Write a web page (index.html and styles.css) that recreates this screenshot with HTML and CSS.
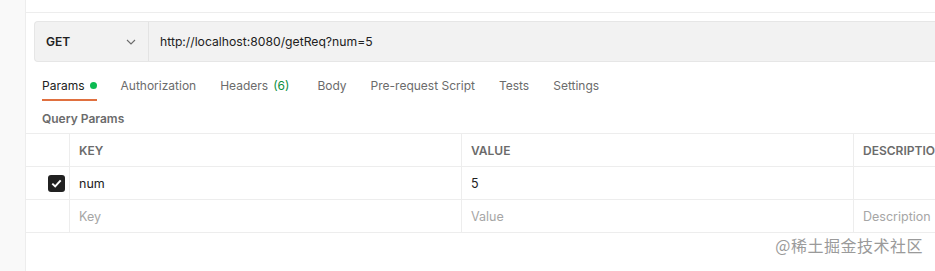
FILE: index.html
```html
<!DOCTYPE html>
<html>
<head>
<meta charset="utf-8">
<title>GET getReq</title>
<link rel="stylesheet" href="styles.css">
</head>
<body>
<div class="sidebar"></div>
<div class="main">
    <div class="topbar"></div>

    <div class="urlbar">
        <div class="method">
            <span>GET</span>
            <svg class="chevron" width="10" height="6" viewBox="0 0 10 6"><path d="M1 1l4 4 4-4" fill="none" stroke="#6b6b6b" stroke-width="1.1"/></svg>
        </div>
        <div class="url">http://localhost:8080/getReq?num=5</div>
    </div>

    <div class="tabs">
        <div class="tab active">Params <span class="dot"></span></div>
        <div class="tab">Authorization</div>
        <div class="tab headers">Headers <span class="count">(6)</span></div>
        <div class="tab">Body</div>
        <div class="tab">Pre-request Script</div>
        <div class="tab">Tests</div>
        <div class="tab">Settings</div>
    </div>

    <div class="section-title">Query Params</div>

    <div class="params">
        <div class="row head">
            <div class="cell check"></div>
            <div class="cell">KEY</div>
            <div class="cell">VALUE</div>
            <div class="cell">DESCRIPTION</div>
        </div>
        <div class="row">
            <div class="cell check">
                <span class="box"><svg width="11" height="9" viewBox="0 0 11 9"><path d="M1.3 4.6l2.9 2.8 5.5-6" fill="none" stroke="#fff" stroke-width="2"/></svg></span>
            </div>
            <div class="cell">num</div>
            <div class="cell">5</div>
            <div class="cell"></div>
        </div>
        <div class="row">
            <div class="cell check"></div>
            <div class="cell placeholder">Key</div>
            <div class="cell placeholder">Value</div>
            <div class="cell placeholder">Description</div>
        </div>
    </div>
</div>

<div class="watermark">@稀土掘金技术社区</div>
</body>
</html>
```

FILE: styles.css
```css
body {
    margin: 0;
    display: flex;
    height: 271px;
    overflow: hidden;
    background: #fff;
    font-family: Inter, "Noto Sans", sans-serif;
    color: #212121;
}

.sidebar {
    width: 25px;
    flex: none;
    background: #f9f9f9;
    border-right: 1px solid #ededed;
}

.main {
    flex: 1;
    overflow: hidden;
}

.topbar {
    height: 12px;
    border-bottom: 1px solid #ededed;
}

.urlbar {
    display: flex;
    height: 39px;
    margin: 8px 0 0 8px;
    background: #f2f2f2;
    border: 1px solid #e6e6e6;
    border-right: none;
    border-radius: 4px 0 0 4px;
}

.method {
    width: 114px;
    flex: none;
    display: flex;
    align-items: center;
    justify-content: space-between;
    padding: 0 12px 0 11px;
    box-sizing: border-box;
    border-right: 1px solid #e3e3e3;
    font-size: 12px;
    font-weight: 600;
}

.url {
    display: flex;
    align-items: center;
    padding-left: 11px;
    font-size: 12.2px;
    color: #212121;
}

.tabs {
    display: flex;
    gap: 24px;
    padding: 0 0 0 16px;
    margin-top: 12px;
}

.tab {
    display: flex;
    align-items: center;
    gap: 5px;
    height: 22px;
    padding-bottom: 3px;
    font-size: 12px;
    color: #6b6b6b;
    border-bottom: 2px solid transparent;
}

.tab.active {
    color: #212121;
    border-bottom-color: #e0703f;
}

.tab.headers {
    margin-right: 4px;
}

.dot {
    width: 7px;
    height: 7px;
    border-radius: 50%;
    background: #0cbb52;
}

.count {
    color: #0a8f3f;
}

.section-title {
    padding: 10px 0 0 16px;
    height: 22px;
    font-size: 12px;
    font-weight: 600;
    color: #6b6b6b;
}

.params {
    border-top: 1px solid #ededed;
}

.row {
    display: grid;
    grid-template-columns: 44px 392px 392px 392px;
    height: 32px;
    border-bottom: 1px solid #ededed;
}

.cell {
    display: flex;
    align-items: center;
    padding-left: 9px;
    border-right: 1px solid #ededed;
    font-size: 12.5px;
    white-space: nowrap;
    overflow: hidden;
}

.head .cell {
    font-size: 12px;
    font-weight: 600;
    color: #6b6b6b;
}

.cell.check {
    justify-content: flex-end;
    padding: 0 4px 0 0;
}

.box {
    width: 17px;
    height: 17px;
    border-radius: 3px;
    background: #212121;
    display: flex;
    align-items: center;
    justify-content: center;
}

.placeholder {
    color: #a6a6a6;
}

.watermark {
    position: absolute;
    right: 12px;
    bottom: 14px;
    font-family: "Noto Sans CJK SC", sans-serif;
    font-size: 16px;
    color: #9a9a9a;
    letter-spacing: 0.5px;
}
```
